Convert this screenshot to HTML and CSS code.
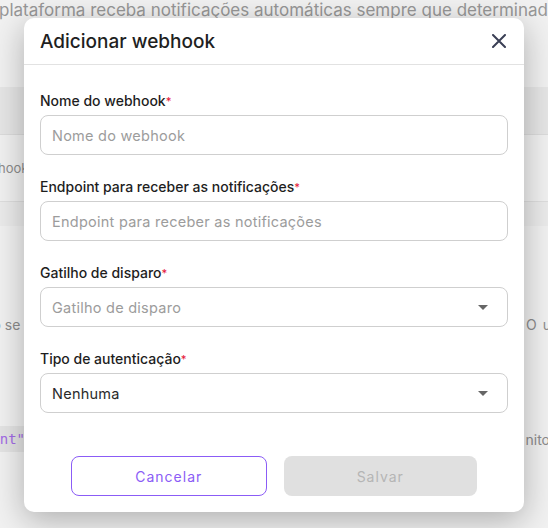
FILE: index.html
```html
<!DOCTYPE html>
<html lang="pt">
<head>
<meta charset="utf-8">
<link rel="stylesheet" href="styles.css">
</head>
<body>
<div class="page">
  <p class="intro">plataforma receba notificações automáticas sempre que determinado evento ocorrer</p>
  <div class="thead"></div>
  <div class="trow"><span class="cell-left">webhook</span></div>
  <div class="tfoot"></div>
  <div class="para"><span>Isso se</span><span>O u</span></div>
  <div class="code-row"><code class="chip">"event"</code><span>nito</span></div>
</div>

<div class="overlay">
  <div class="modal">
    <div class="modal-head">
      <h2>Adicionar webhook</h2>
      <button class="close" aria-label="Fechar">
        <svg width="14" height="14" viewBox="0 0 14 14"><path d="M1 1L13 13M13 1L1 13" stroke="#3a3f55" stroke-width="2" stroke-linecap="round" fill="none"/></svg>
      </button>
    </div>
    <div class="modal-body">
      <div class="field">
        <label>Nome do webhook<span class="req">*</span></label>
        <div class="input placeholder">Nome do webhook</div>
      </div>
      <div class="field">
        <label>Endpoint para receber as notificações<span class="req">*</span></label>
        <div class="input placeholder">Endpoint para receber as notificações</div>
      </div>
      <div class="field">
        <label>Gatilho de disparo<span class="req">*</span></label>
        <div class="input select placeholder">Gatilho de disparo<span class="caret"></span></div>
      </div>
      <div class="field">
        <label>Tipo de autenticação<span class="req">*</span></label>
        <div class="input select">Nenhuma<span class="caret"></span></div>
      </div>
    </div>
    <div class="modal-foot">
      <button class="btn btn-outline">Cancelar</button>
      <button class="btn btn-disabled">Salvar</button>
    </div>
  </div>
</div>
</body>
</html>
```
FILE: styles.css
```css
* { box-sizing: border-box; }
html, body { margin: 0; padding: 0; }
body {
  width: 548px;
  height: 528px;
  overflow: hidden;
  background: #f1f1f1;
  font-family: "Inter", "Open Sans", sans-serif;
  position: relative;
}
.page { color: #8a8a8a; }
.intro {
  margin: 0;
  white-space: nowrap;
  font-size: 17px;
  line-height: 21px;
  letter-spacing: 0;
  text-indent: -1px;
  color: #979797;
}
.thead {
  margin-top: 66px;
  height: 48px;
  background: #e6e6e6;
  border-bottom: 1px solid #dcdcdc;
}
.trow {
  height: 67px;
  display: flex;
  align-items: center;
  font-size: 13px;
  color: #8c8c8c;
  border-bottom: 1px solid #dedede;
}
.cell-left { margin-left: -28px; }
.tfoot { height: 24px; background: #ebebeb; }
.para {
  margin-top: 90px;
  display: flex;
  justify-content: space-between;
  font-size: 14px;
  color: #8c8c8c;
}
.para span:first-child { margin-left: -26px; }
.para span:last-child { margin-right: -4px; letter-spacing: 1px; }
.code-row {
  margin-top: 93px;
  display: flex;
  justify-content: space-between;
  align-items: center;
  font-size: 14px;
}
.chip {
  font-family: "DejaVu Sans Mono", monospace;
  font-size: 14px;
  color: #a26be6;
  background: #e4e4e4;
  padding: 5px 6px;
  margin-left: -40px;
}
.code-row span:last-child { margin-right: -2px; color: #8c8c8c; }

.overlay {
  position: absolute;
  inset: 0;
  display: flex;
  justify-content: center;
  padding-top: 18px;
}
.modal {
  width: 500px;
  height: 494px;
  background: #fff;
  border-radius: 10px;
  box-shadow: 0 8px 32px rgba(0,0,0,0.28);
  display: flex;
  flex-direction: column;
}
.modal-head {
  height: 47px;
  border-bottom: 1px solid #e2e2e2;
  display: flex;
  align-items: center;
  justify-content: space-between;
  padding: 0 16px;
}
.modal-head h2 {
  margin: 0;
  font-size: 19px;
  font-weight: 500;
  color: #1f1f1f;
}
.close {
  background: none;
  border: 0;
  padding: 0;
  display: flex;
  margin-right: 2px;
}
.modal-body {
  padding: 27px 16px 0;
  display: flex;
  flex-direction: column;
  gap: 23px;
}
.field { display: flex; flex-direction: column; gap: 5px; }
.field label {
  font-size: 14px;
  font-weight: 500;
  color: #1e1e1e;
  line-height: 18px;
}
.req { color: #e5193b; font-size: 11px; vertical-align: top; }
.input {
  height: 40px;
  border: 1px solid #cfcfcf;
  border-radius: 8px;
  padding: 0 11px;
  display: flex;
  align-items: center;
  font-size: 14.5px;
  letter-spacing: 0.25px;
  color: #2a2a2a;
}
.input.placeholder { color: #9c9c9c; }
.select { justify-content: space-between; }
.caret {
  width: 0; height: 0;
  border-left: 5px solid transparent;
  border-right: 5px solid transparent;
  border-top: 5px solid #666;
  margin-right: 8px;
}
.modal-foot {
  margin-top: auto;
  padding: 0 47px 16px;
  display: flex;
  gap: 17px;
}
.btn {
  flex: 1;
  height: 40px;
  border-radius: 8px;
  font-family: inherit;
  font-size: 14px;
  letter-spacing: 1px;
}
.btn-outline {
  background: #fff;
  border: 1px solid #8b5cf6;
  color: #8b5cf6;
}
.btn-disabled {
  background: #e0e0e0;
  border: 0;
  color: #b5b5b5;
}
```
